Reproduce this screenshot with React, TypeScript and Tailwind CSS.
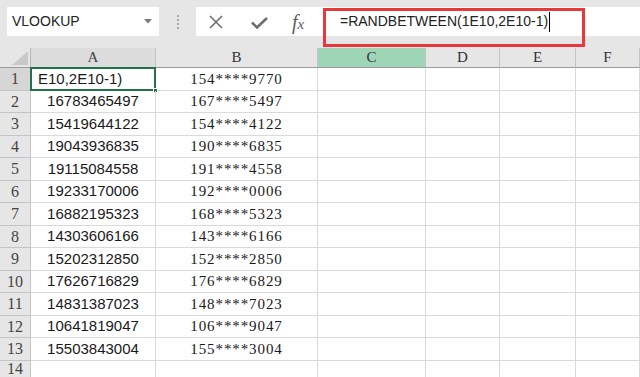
const rowsData: [string, string][] = [
  ['E10,2E10-1)', '154****9770'],
  ['16783465497', '167****5497'],
  ['15419644122', '154****4122'],
  ['19043936835', '190****6835'],
  ['19115084558', '191****4558'],
  ['19233170006', '192****0006'],
  ['16882195323', '168****5323'],
  ['14303606166', '143****6166'],
  ['15202312850', '152****2850'],
  ['17626716829', '176****6829'],
  ['14831387023', '148****7023'],
  ['10641819047', '106****9047'],
  ['15503843004', '155****3004'],
  ['', ''],
]

// rows are 22.5px in the screenshot, so alternate 23/22
const ROW_H = ['h-[23px]', 'h-[22px]']

const cols = ['C', 'D', 'E', 'F']

function FormulaBar() {
  return (
    <div className="h-[48px] bg-[#e6e6e6] flex items-start pt-[7px]">
      <div className="ml-[7px] w-[152px] h-[29px] bg-white flex items-center pl-[5px] pr-[6px] text-[14px] text-[#222]">
        <span className="flex-1">VLOOKUP</span>
        <svg width="8" height="5" viewBox="0 0 8 5" className="mr-[1px]">
          <path d="M0 0h8L4 4.5z" fill="#7a7a7a" />
        </svg>
      </div>
      <div className="w-[37px] h-[29px] flex flex-col items-center justify-center gap-[2px]">
        <span className="w-[2px] h-[2px] bg-[#a8a8a8]" />
        <span className="w-[2px] h-[2px] bg-[#a8a8a8]" />
        <span className="w-[2px] h-[2px] bg-[#a8a8a8]" />
        <span className="w-[2px] h-[2px] bg-[#a8a8a8]" />
      </div>
      <div className="flex-1 h-[29px] bg-white flex items-center">
        <div className="w-[127px] h-full flex items-center">
          <svg width="14" height="14" viewBox="0 0 14 14" className="ml-[13px]">
            <path d="M1 1l12 12M13 1L1 13" stroke="#6e6e6e" strokeWidth="1.6" />
          </svg>
          <svg width="17" height="12" viewBox="0 0 17 12" className="ml-[28px] mt-[3px]">
            <path d="M1 5.5l5 5L16 1" stroke="#6e6e6e" strokeWidth="2.6" fill="none" />
          </svg>
          <span className="ml-[24px] text-[20px] italic text-[#5e5e5e] leading-none" style={{ fontFamily: '"Liberation Serif", serif' }}>
            f<span className="text-[15px]">x</span>
          </span>
        </div>
        <div className="relative flex-1 h-full flex items-center pl-[17px] text-[14px] text-[#222]">
          <span>=RANDBETWEEN(1E10,2E10-1)</span>
          <span className="ml-[1px] w-[1px] h-[20px] bg-black" />
          <div className="absolute left-[0px] top-[1px] w-[262px] h-[39px] border-[3px] border-[#e8383b]" />
        </div>
      </div>
    </div>
  )
}

export default function App() {
  return (
    <div className="w-[640px] h-[377px] overflow-hidden bg-white" style={{ fontFamily: '"Liberation Sans", Arial, sans-serif' }}>
      <FormulaBar />
      <div className="grid grid-cols-[31px_125px_162px_108px_74px_76px_64px]">
        {/* header row */}
        <div className="relative h-[20px] bg-[#e6e6e6] border-r border-b border-[#b5b5b5] border-b-[#9c9c9c]">
          <svg width="16" height="14" viewBox="0 0 16 14" className="absolute right-[2px] bottom-[2px]">
            <path d="M16 0V14H0z" fill="#c9c9c9" />
          </svg>
        </div>
        <div className="h-[20px] bg-[#dcdcdc] border-r border-b border-[#c4c4c4] border-b-[#9c9c9c] flex items-center justify-center text-[15px] text-[#444]" style={{ fontFamily: '"Liberation Serif", serif' }}>A</div>
        <div className="h-[20px] bg-[#e6e6e6] border-r border-b border-[#c4c4c4] border-b-[#9c9c9c] flex items-center justify-center text-[15px] text-[#333]" style={{ fontFamily: '"Liberation Serif", serif' }}>B</div>
        {cols.map((c) => (
          <div
            key={c}
            className={
              c === 'C'
                ? 'h-[20px] bg-[#9fd5b7] border-r border-b border-[#c4c4c4] border-b-[#9c9c9c] flex items-center justify-center text-[15px] text-[#333]'
                : 'h-[20px] bg-[#e6e6e6] border-r border-b border-[#c4c4c4] border-b-[#9c9c9c] flex items-center justify-center text-[15px] text-[#333]'
            }
            style={{ fontFamily: '"Liberation Serif", serif' }}
          >
            {c}
          </div>
        ))}

        {rowsData.map(([a, b], i) => {
          const h = i === 13 ? 'h-[17px]' : ROW_H[i % 2]
          return [
            <div
              key={`n${i}`}
              className={`${h} ${i === 0 ? 'bg-[#d6d6d6]' : 'bg-[#e6e6e6]'} border-r border-b border-[#c4c4c4] flex items-center justify-center text-[16px] text-[#444]`}
              style={{ fontFamily: '"Liberation Serif", serif' }}
            >
              {i + 1}
            </div>,
            <div
              key={`a${i}`}
              className={`${h} relative border-r border-b border-[#dadada] flex items-center text-[15px] text-[#1a1a1a] ${i === 0 ? 'justify-start pl-[7px]' : 'justify-center'}`}
            >
              {a}
              {i === 0 && (
                <>
                  <div className="absolute -left-[1px] -top-[1px] right-[-1px] bottom-[-1px] border-2 border-[#217346]" />
                  <div className="absolute right-[-3px] bottom-[-3px] w-[5px] h-[5px] bg-[#217346] border border-white" />
                </>
              )}
            </div>,
            <div
              key={`b${i}`}
              className={`${h} border-r border-b border-[#dadada] flex items-center justify-center text-[15px] tracking-[0.9px] text-[#1a1a1a]`}
              style={{ fontFamily: '"Liberation Serif", serif' }}
            >
              {b}
            </div>,
            ...cols.map((c) => <div key={`${c}${i}`} className={`${h} border-r border-b border-[#dadada]`} />),
          ]
        })}
      </div>
    </div>
  )
}
